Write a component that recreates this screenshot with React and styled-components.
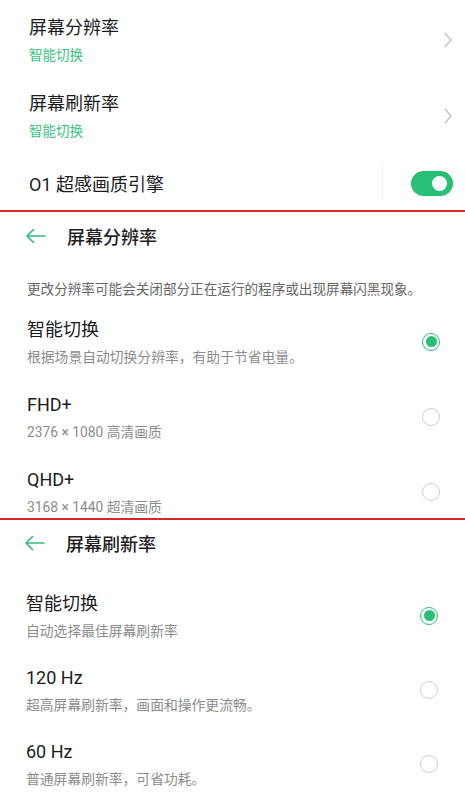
import React from "react";
import styled, { createGlobalStyle } from "styled-components";

const GlobalStyle = createGlobalStyle`
	body {
		margin: 0;
		background: #ffffff;
		font-family: Roboto, "Noto Sans CJK SC", sans-serif;
		-webkit-font-smoothing: antialiased;
	}
`;

const Page = styled.div`
	width: 465px;
	height: 800px;
	display: flex;
	flex-direction: column;
	overflow: hidden;
	background: #ffffff;
`;

const Panel = styled.section`
	height: ${(props) => props.height}px;
	padding-top: ${(props) => props.top || 0}px;
	box-sizing: border-box;
	display: flex;
	flex-direction: column;
	overflow: hidden;
	flex-shrink: 0;
`;

const RedLine = styled.div`
	height: 2px;
	background: #d3262d;
	flex-shrink: 0;
`;

// rows with title + subtitle
const Row = styled.div`
	display: flex;
	align-items: center;
	justify-content: space-between;
	flex-shrink: 0;
	padding: 10px 12px ${(props) => props.bottom || 14}px ${(props) => props.inset || 27}px;
`;

const TextBlock = styled.div`
	display: flex;
	flex-direction: column;
`;

const Title = styled.div`
	font-size: 18px;
	line-height: 28px;
	color: #1c1c1c;
`;

const Sub = styled.div`
	margin-top: 3px;
	font-size: ${(props) => (props.green ? 13.5 : 13.8)}px;
	line-height: 20px;
	color: ${(props) => (props.green ? "#36c47f" : "#8c8c8c")};
`;

const ToggleRow = styled.div`
	height: 54px;
	display: flex;
	align-items: center;
	padding: 0 12px 0 29px;
	flex-shrink: 0;
`;

const ToggleLabel = styled.div`
	flex: 1;
	font-size: 18px;
	color: #1c1c1c;
`;

const VSep = styled.div`
	width: 1px;
	height: 34px;
	background: #f3f3f3;
	margin-right: 28px;
`;

const Switch = styled.div`
	width: 42px;
	height: 25px;
	border-radius: 13px;
	background: #28c076;
	display: flex;
	align-items: center;
	justify-content: flex-end;
	padding-right: 6px;
	box-sizing: border-box;
`;

const Knob = styled.div`
	width: 15px;
	height: 15px;
	border-radius: 50%;
	background: #ffffff;
`;

const Header = styled.div`
	height: ${(props) => props.height}px;
	display: flex;
	align-items: center;
	padding-left: ${(props) => props.inset}px;
	flex-shrink: 0;
`;

const HeaderTitle = styled.div`
	margin-left: 21px;
	font-size: 18px;
	font-weight: 500;
	color: #1f1f1f;
`;

const Desc = styled.div`
	padding: 19px 12px 7px 27px;
	font-size: 13.6px;
	line-height: 20px;
	color: #666666;
	flex-shrink: 0;
`;

const Spacer = styled.div`
	height: ${(props) => props.h}px;
	flex-shrink: 0;
`;

const Radio = styled.div`
	width: 18px;
	height: 18px;
	border-radius: 50%;
	box-sizing: border-box;
	border: 1.5px solid ${(props) => (props.checked ? "#28c076" : "#cfcfcf")};
	display: flex;
	align-items: center;
	justify-content: center;
	margin-right: ${(props) => props.right || 13}px;
	&::after {
		content: "";
		width: 11px;
		height: 11px;
		border-radius: 50%;
		background: ${(props) => (props.checked ? "#28c076" : "transparent")};
	}
`;

const Chevron = () => (
	<svg width="10" height="18" viewBox="0 0 10 18">
		<path d="M2 2 L8 9 L2 16" fill="none" stroke="#c2c2c2" strokeWidth="1.4" />
	</svg>
);

const BackArrow = () => (
	<svg width="21" height="16" viewBox="0 0 21 16">
		<path
			d="M20 8 H2 M8.5 1.5 L2 8 L8.5 14.5"
			fill="none"
			stroke="#2fbf7b"
			strokeWidth="1.6"
			strokeLinecap="round"
			strokeLinejoin="round"
		/>
	</svg>
);

const resolutions = [
	{ title: "智能切换", sub: "根据场景自动切换分辨率，有助于节省电量。", checked: true },
	{ title: "FHD+", sub: "2376 × 1080 高清画质" },
	{ title: "QHD+", sub: "3168 × 1440 超清画质" },
];

const rates = [
	{ title: "智能切换", sub: "自动选择最佳屏幕刷新率", checked: true },
	{ title: "120 Hz", sub: "超高屏幕刷新率，画面和操作更流畅。" },
	{ title: "60 Hz", sub: "普通屏幕刷新率，可省功耗。" },
];

export default function App() {
	return (
		<Page>
			<GlobalStyle />
			<Panel height={210} top={4}>
				<Row inset={29} bottom={15}>
					<TextBlock>
						<Title>屏幕分辨率</Title>
						<Sub green>智能切换</Sub>
					</TextBlock>
					<Chevron />
				</Row>
				<Row inset={29} bottom={15}>
					<TextBlock>
						<Title>屏幕刷新率</Title>
						<Sub green>智能切换</Sub>
					</TextBlock>
					<Chevron />
				</Row>
				<ToggleRow>
					<ToggleLabel>O1 超感画质引擎</ToggleLabel>
					<VSep />
					<Switch>
						<Knob />
					</Switch>
				</ToggleRow>
			</Panel>
			<RedLine />
			<Panel height={306}>
				<Header height={48} inset={25}>
					<BackArrow />
					<HeaderTitle>屏幕分辨率</HeaderTitle>
				</Header>
				<Desc>更改分辨率可能会关闭部分正在运行的程序或出现屏幕闪黑现象。</Desc>
				{resolutions.map((item) => (
					<Row key={item.title} inset={27} bottom={14}>
						<TextBlock>
							<Title>{item.title}</Title>
							<Sub>{item.sub}</Sub>
						</TextBlock>
						<Radio checked={item.checked} right={13} />
					</Row>
				))}
			</Panel>
			<RedLine />
			<Panel height={280}>
				<Header height={46} inset={24}>
					<BackArrow />
					<HeaderTitle>屏幕刷新率</HeaderTitle>
				</Header>
				<Spacer h={14} />
				{rates.map((item) => (
					<Row key={item.title} inset={26} bottom={13}>
						<TextBlock>
							<Title>{item.title}</Title>
							<Sub>{item.sub}</Sub>
						</TextBlock>
						<Radio checked={item.checked} right={15} />
					</Row>
				))}
			</Panel>
		</Page>
	);
}
